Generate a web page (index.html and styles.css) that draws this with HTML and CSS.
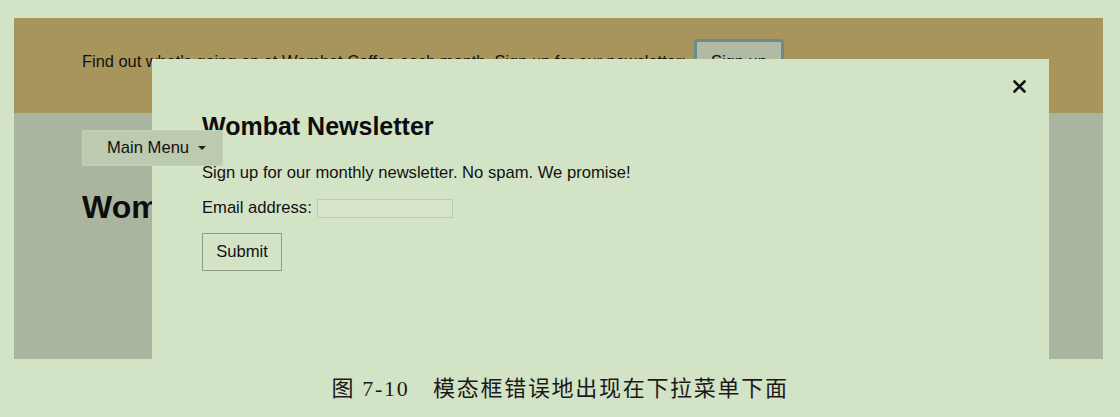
FILE: index.html
```html
<!DOCTYPE html>
<html lang="en">
<head>
<meta charset="utf-8">
<title>Wombat Coffee</title>
<link rel="stylesheet" href="styles.css">
</head>
<body>
<div class="screen">
  <div class="promo">
    <span class="promo-text">Find out what's going on at Wombat Coffee each month. Sign up for our newsletter:</span>
    <button class="signup">Sign up</button>
  </div>
  <div class="content">
    <button class="menu">Main Menu <span class="caret"></span></button>
    <h1 class="title">Wombat Coffee Roasters</h1>
  </div>
  <div class="modal">
    <button class="close" aria-label="close">
      <svg width="13" height="13" viewBox="0 0 13 13"><path d="M1.5 1.5 L11.5 11.5 M11.5 1.5 L1.5 11.5" stroke="#111" stroke-width="2.6" stroke-linecap="round"/></svg>
    </button>
    <h2 class="modal-title">Wombat Newsletter</h2>
    <p class="modal-text">Sign up for our monthly newsletter. No spam. We promise!</p>
    <div class="field">
      <label class="label" for="email">Email address:</label>
      <input class="email" id="email" type="text">
    </div>
    <button class="submit">Submit</button>
  </div>
</div>
<div class="caption">图 7-10　模态框错误地出现在下拉菜单下面</div>
</body>
</html>
```

FILE: styles.css
```css
html, body {
  margin: 0;
  padding: 0;
  background: #d3e3c6;
}
body {
  font-family: "Liberation Sans", Arial, sans-serif;
  color: #111;
  width: 1120px;
  height: 417px;
  overflow: hidden;
}
.screen {
  position: relative;
  margin: 18px 0 0 14px;
  width: 1089px;
  height: 341px;
  overflow: hidden;
  background: #a9b59f;
}
.promo {
  box-sizing: border-box;
  height: 95px;
  background: #a8955c;
  display: flex;
  align-items: center;
  padding: 0 68px 9px;
}
.promo-text {
  font-size: 16.4px;
  white-space: nowrap;
}
.signup {
  margin-left: 8px;
  height: 44px;
  padding: 0 14px;
  border: 3px solid #6d8a8c;
  border-radius: 4px;
  background: #b1bba3;
  font: 16.5px "Liberation Sans", Arial, sans-serif;
  color: #111;
}
.content {
  padding: 17px 68px 0;
}
.menu {
  position: relative;
  z-index: 2;
  display: flex;
  align-items: center;
  box-sizing: border-box;
  width: 141px;
  height: 36px;
  padding: 0 0 0 24px;
  border: 1px solid #c4d1b7;
  background: #bccaaf;
  font: 16.6px "Liberation Sans", Arial, sans-serif;
  color: #111;
}
.caret {
  display: inline-block;
  margin-left: 9px;
  width: 0;
  height: 0;
  border-left: 4px solid transparent;
  border-right: 4px solid transparent;
  border-top: 4px solid #222;
}
.title {
  margin: 22px 0 0;
  font-size: 32px;
  line-height: 38px;
  font-weight: bold;
  color: #0d0d0d;
}
.modal {
  position: absolute;
  z-index: 1;
  left: 138px;
  top: 41px;
  box-sizing: border-box;
  width: 897px;
  height: 330px;
  padding: 52px 50px;
  background: #d3e3c6;
}
.close {
  position: absolute;
  right: 23px;
  top: 21px;
  padding: 0;
  border: 0;
  background: none;
  line-height: 0;
}
.modal-title {
  margin: 0 0 21px;
  font-size: 25px;
  line-height: 31px;
  font-weight: bold;
  color: #0d0d0d;
}
.modal-text {
  margin: 0;
  font-size: 16.6px;
  line-height: 19px;
}
.field {
  margin-top: 16px;
  display: flex;
  align-items: center;
}
.label {
  font-size: 16.6px;
}
.email {
  box-sizing: border-box;
  margin-left: 5px;
  width: 136px;
  height: 19px;
  border: 1px solid #bdcdb2;
  background: #d6e5ca;
  padding: 0;
}
.submit {
  margin-top: 15px;
  box-sizing: border-box;
  width: 80px;
  height: 38px;
  border: 1.5px solid #8d9d84;
  background: transparent;
  font: 16.6px "Liberation Sans", Arial, sans-serif;
  color: #111;
}
.caption {
  margin-top: 17px;
  text-align: center;
  font-family: "Liberation Serif", "Noto Sans CJK SC", serif;
  font-size: 22px;
  line-height: 26px;
  letter-spacing: 1.7px;
  color: #1a1a1a;
}
```
